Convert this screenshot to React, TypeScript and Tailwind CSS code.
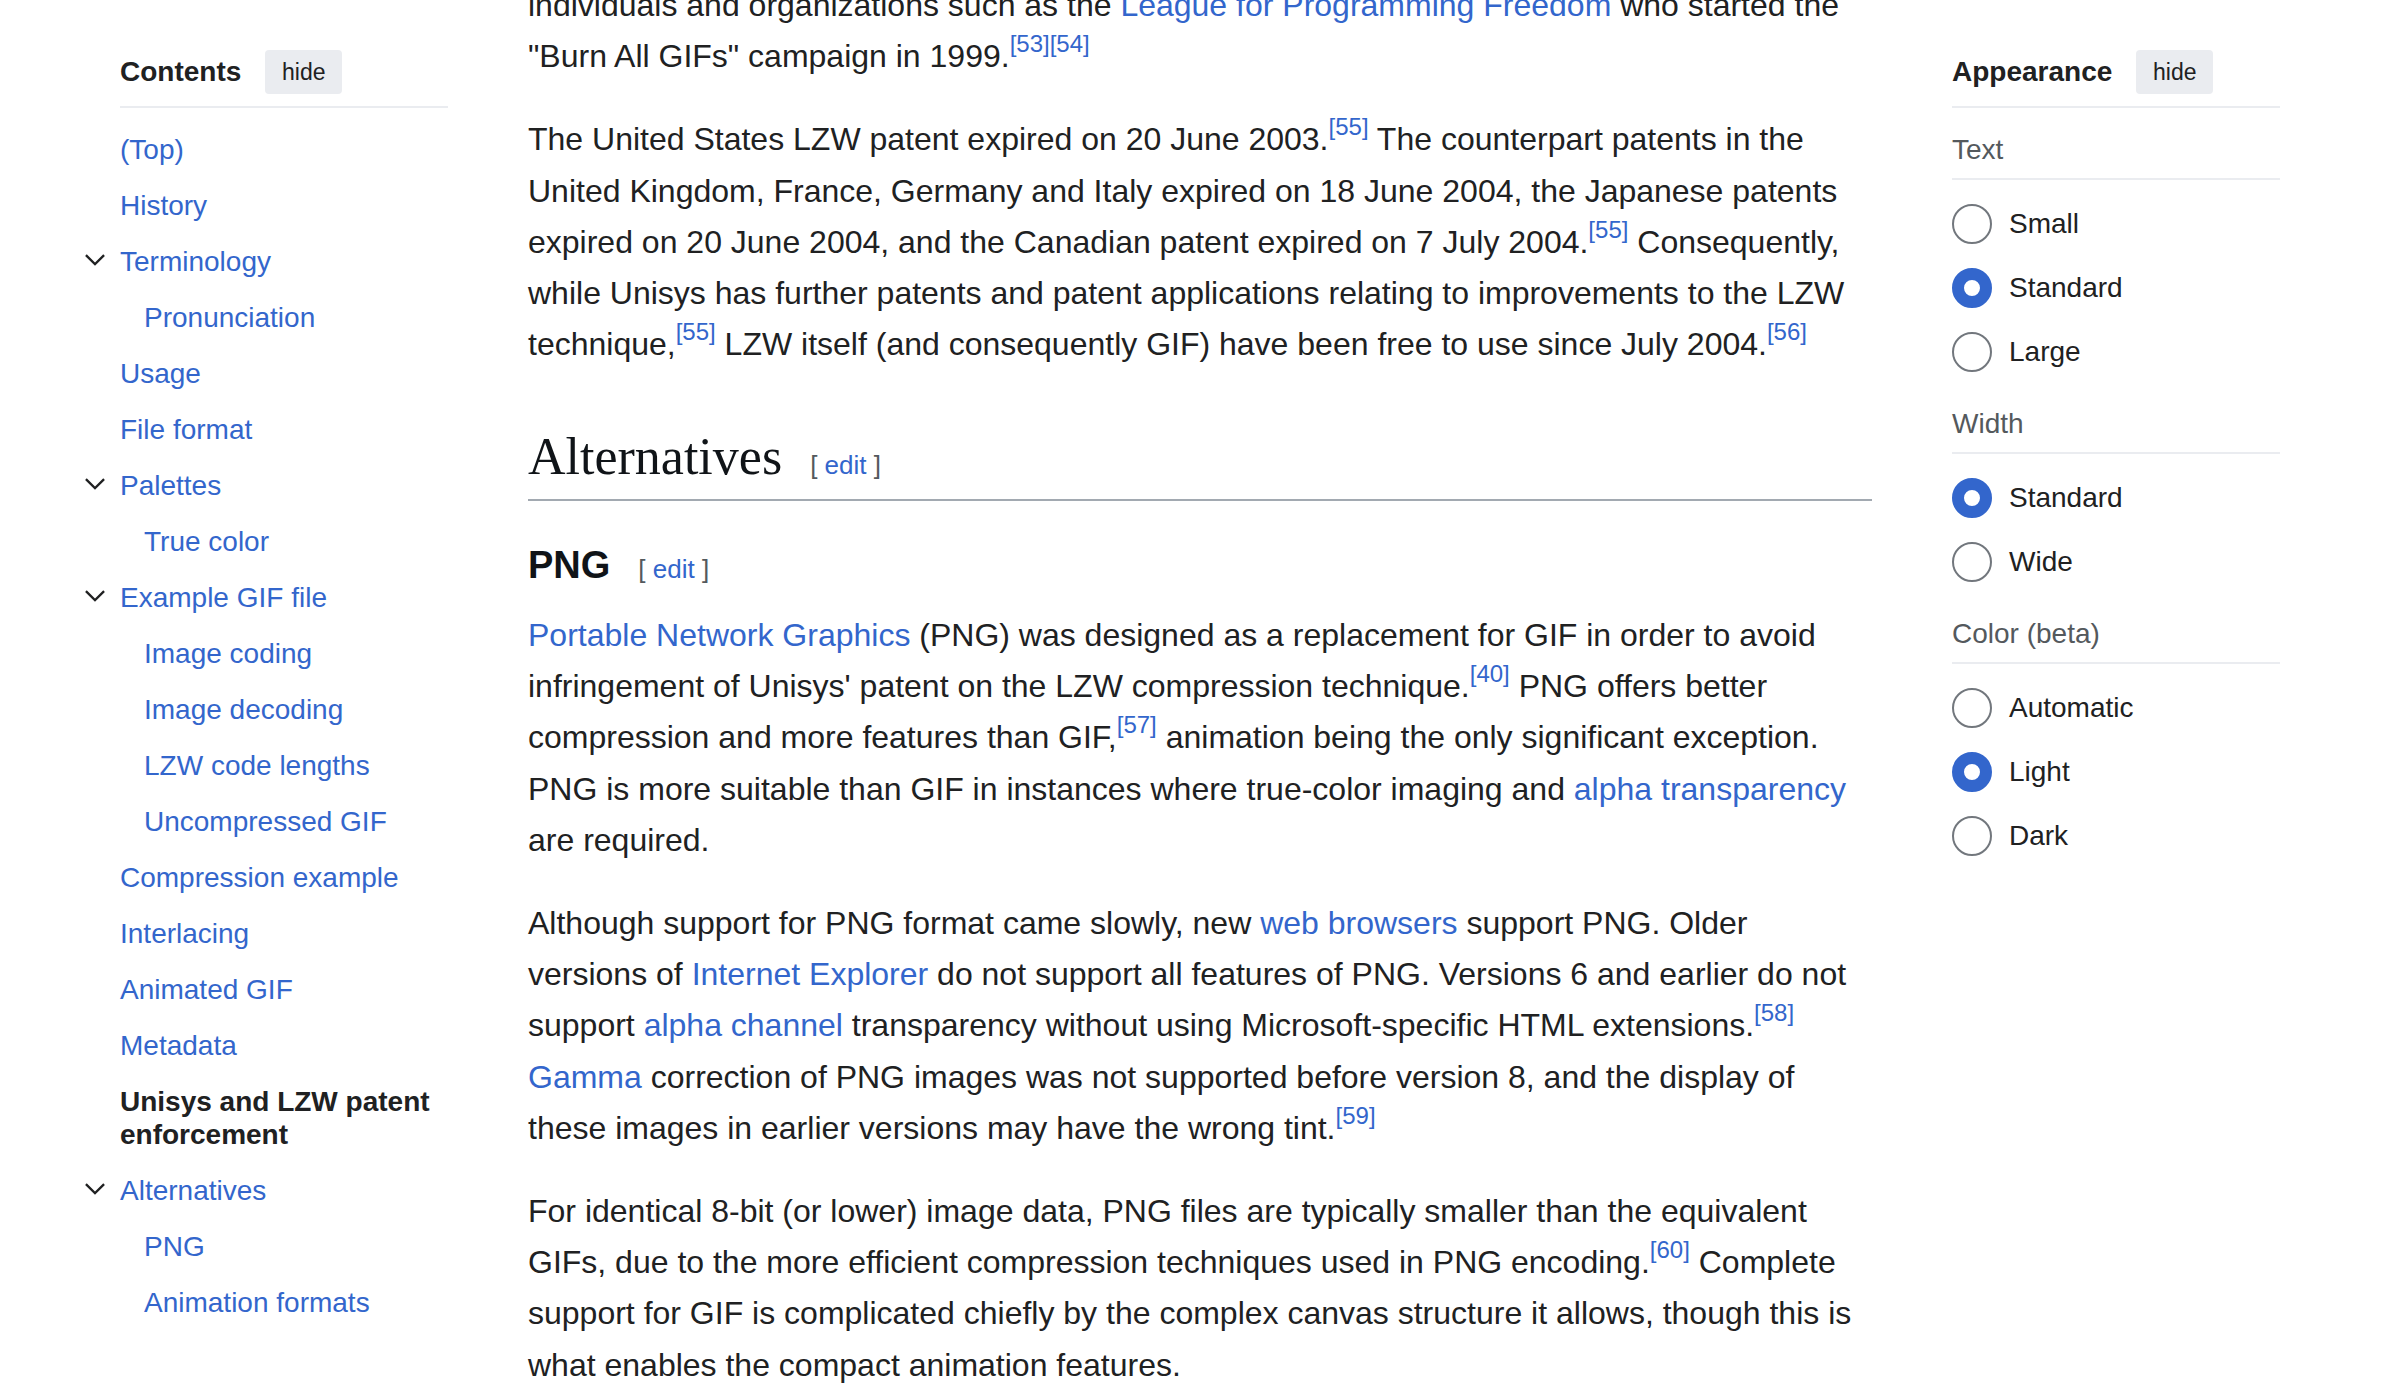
import React from "react";

type TocItem = { label: string; toggle?: boolean; sub?: boolean; active?: boolean };

const toc: TocItem[] = [
  { label: "(Top)" },
  { label: "History" },
  { label: "Terminology", toggle: true },
  { label: "Pronunciation", sub: true },
  { label: "Usage" },
  { label: "File format" },
  { label: "Palettes", toggle: true },
  { label: "True color", sub: true },
  { label: "Example GIF file", toggle: true },
  { label: "Image coding", sub: true },
  { label: "Image decoding", sub: true },
  { label: "LZW code lengths", sub: true },
  { label: "Uncompressed GIF", sub: true },
  { label: "Compression example" },
  { label: "Interlacing" },
  { label: "Animated GIF" },
  { label: "Metadata" },
  { label: "Unisys and LZW patent enforcement", active: true },
  { label: "Alternatives", toggle: true },
  { label: "PNG", sub: true },
  { label: "Animation formats", sub: true },
];

const appearance = [
  { title: "Text", options: ["Small", "Standard", "Large"], checked: "Standard" },
  { title: "Width", options: ["Standard", "Wide"], checked: "Standard" },
  { title: "Color (beta)", options: ["Automatic", "Light", "Dark"], checked: "Light" },
];

const Chevron = () => (
  <svg width="22" height="22" viewBox="0 0 20 20" fill="#202122">
    <path d="m17.5 4.75-7.5 7.5-7.5-7.5L1 6.25l9 9 9-9z" />
  </svg>
);

const A = ({ children }: { children: React.ReactNode }) => (
  <a className="text-[#3366cc] cursor-pointer hover:underline">{children}</a>
);

// preflight already makes sup relative with line-height 0
const Ref = ({ n }: { n: string[] }) => (
  <sup className="-top-[15px] text-[24px] text-[#3366cc]">
    {n.map((x) => (
      <a key={x} className="cursor-pointer">[{x}]</a>
    ))}
  </sup>
);

const PanelHeader = ({ title }: { title: string }) => (
  <div className="flex items-center gap-6 pt-[50px] pb-[12px] border-b-2 border-[#eaecf0]">
    <div className="text-[28px] font-bold text-[#202122]">{title}</div>
    <button className="w-[77px] h-[44px] rounded-[4px] bg-[#eaecf0] text-[23px] text-[#202122]">
      hide
    </button>
  </div>
);

const Radio = ({ label, checked }: { label: string; checked: boolean }) => (
  <label className="flex items-center gap-[17px] h-[40px] cursor-pointer">
    <span
      className={
        checked
          ? "w-[40px] h-[40px] rounded-full border-[12px] border-[#3366cc] bg-white"
          : "w-[40px] h-[40px] rounded-full border-2 border-[#72777d] bg-white"
      }
    />
    <span className="text-[28px] text-[#202122]">{label}</span>
  </label>
);

const Edit = () => (
  <span className="ml-[28px] text-[26px] leading-none font-normal font-['Liberation_Sans',Arial,sans-serif] text-[#54595d]">
    [ <A>edit</A> ]
  </span>
);

export default function App() {
  return (
    <div className="min-h-screen bg-white font-['Liberation_Sans',Arial,sans-serif] text-[#202122] overflow-hidden">
      <div className="flex gap-[80px] px-[120px] h-[1398px]">
        <aside className="w-[328px] shrink-0">
          <PanelHeader title="Contents" />
          <ul className="pt-[13px] -ml-[36px]">
            {toc.map((item) => (
              <li key={item.label} className="flex py-[11.5px] text-[28px] leading-[33px]">
                <div className="w-[36px] shrink-0 pt-[4px]">{item.toggle && <Chevron />}</div>
                <div className={item.sub ? "pl-[24px]" : ""}>
                  {item.active ? (
                    <span className="font-bold text-[#202122]">{item.label}</span>
                  ) : (
                    <a className="text-[#3366cc] cursor-pointer">{item.label}</a>
                  )}
                </div>
              </li>
            ))}
          </ul>
        </aside>

        <main className="flex-1 min-w-0 text-[32px] leading-[51.2px]">
          <p className="-mt-[20px] mb-[32px]">
            individuals and organizations such as the <A>League for Programming Freedom</A> who
            started the "Burn All GIFs" campaign in 1999.
            <Ref n={["53", "54"]} />
          </p>
          <p className="mb-[32px]">
            The United States LZW patent expired on 20 June 2003.
            <Ref n={["55"]} /> The counterpart patents in the United Kingdom, France, Germany and
            Italy expired on 18 June 2004, the Japanese patents expired on 20 June 2004, and the
            Canadian patent expired on 7 July 2004.
            <Ref n={["55"]} /> Consequently, while Unisys has further patents and patent applications
            relating to improvements to the LZW technique,
            <Ref n={["55"]} /> LZW itself (and consequently GIF) have been free to use since July
            2004.
            <Ref n={["56"]} />
          </p>

          <h2 className="mt-[54px] pb-[10px] border-b-2 border-[#a2a9b1] font-['Liberation_Serif','Times_New_Roman',serif] text-[52px] leading-[65px] text-[#101418]">
            Alternatives
            <Edit />
          </h2>

          <h3 className="mt-[41px] mb-[20px] text-[38px] leading-[47.5px] font-bold text-[#101418]">
            PNG
            <Edit />
          </h3>

          <p className="mb-[32px]">
            <A>Portable Network Graphics</A> (PNG) was designed as a replacement for GIF in order to
            avoid infringement of Unisys' patent on the LZW compression technique.
            <Ref n={["40"]} /> PNG offers better compression and more features than GIF,
            <Ref n={["57"]} /> animation being the only significant exception. PNG is more suitable
            than GIF in instances where true-color imaging and <A>alpha transparency</A> are
            required.
          </p>
          <p className="mb-[32px]">
            Although support for PNG format came slowly, new <A>web browsers</A> support PNG. Older
            versions of <A>Internet Explorer</A> do not support all features of PNG. Versions 6 and
            earlier do not support <A>alpha channel</A> transparency without using
            Microsoft-specific HTML extensions.
            <Ref n={["58"]} /> <A>Gamma</A> correction of PNG images was not supported before version
            8, and the display of these images in earlier versions may have the wrong tint.
            <Ref n={["59"]} />
          </p>
          <p className="mb-[32px]">
            For identical 8-bit (or lower) image data, PNG files are typically smaller than the
            equivalent GIFs, due to the more efficient compression techniques used in PNG encoding.
            <Ref n={["60"]} /> Complete support for GIF is complicated chiefly by the complex canvas
            structure it allows, though this is what enables the compact animation features.
          </p>
        </main>

        <aside className="w-[328px] shrink-0">
          <PanelHeader title="Appearance" />
          {appearance.map((sec, i) => (
            <div key={sec.title} className={i === 0 ? "mt-[25px]" : "mt-[35px]"}>
              <div className="pb-[11px] border-b-2 border-[#eaecf0] text-[28px] leading-[34px] text-[#54595d]">
                {sec.title}
              </div>
              <div className="mt-[24px] flex flex-col gap-[24px]">
                {sec.options.map((o) => (
                  <Radio key={o} label={o} checked={o === sec.checked} />
                ))}
              </div>
            </div>
          ))}
        </aside>
      </div>
    </div>
  );
}
